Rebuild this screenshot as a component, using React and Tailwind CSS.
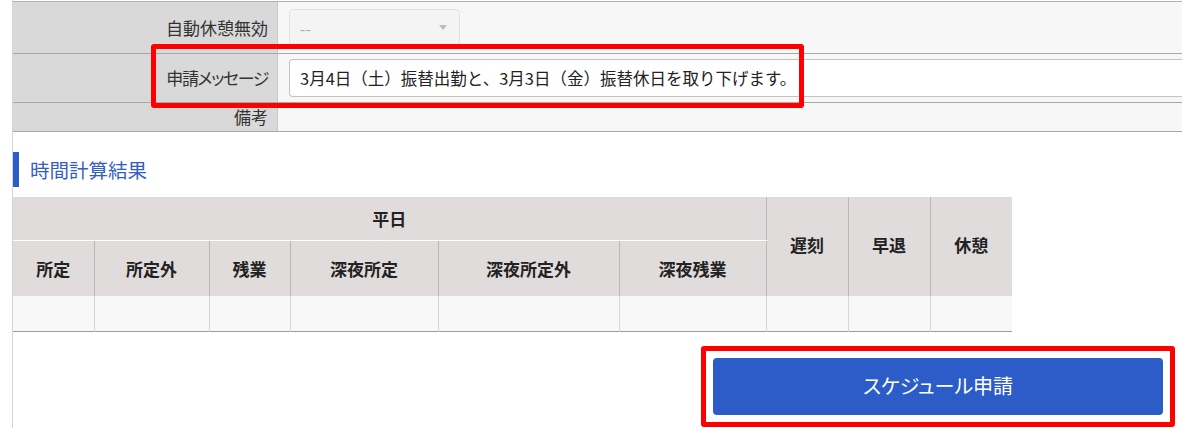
import React from 'react';

const font = { fontFamily: '"Noto Sans CJK JP", "Noto Sans", sans-serif' };

const subCols = [
  { label: '所定', w: 'w-[81px]' },
  { label: '所定外', w: 'w-[115px]' },
  { label: '残業', w: 'w-[81px]' },
  { label: '深夜所定', w: 'w-[148px]' },
  { label: '深夜所定外', w: 'w-[181px]' },
  { label: '深夜残業', w: 'w-[147px]' },
];

const sideCols = ['遅刻', '早退', '休憩'];

function FormRow({ label, height, children, last, tight }) {
  return (
    <div className={`flex ${height} ${last ? 'border-b border-[#a8a8a8]' : ''}`}>
      <div
        className={`flex w-[264px] shrink-0 items-center justify-end bg-[#d9d9d9] pr-[9px] text-[17px] text-[#333] [font-feature-settings:'palt'] ${
          tight ? 'tracking-[-1.4px]' : ''
        }`}
      >
        {label}
      </div>
      <div className="flex flex-1 items-center border-l border-[#c6c6c6] bg-[#f7f7f7] pl-[11px]">{children}</div>
    </div>
  );
}

export default function App() {
  return (
    <div className="h-[428px] w-[1182px] overflow-hidden bg-white pl-[12px]" style={font}>
      <div className="relative h-full border-l border-[#d4d4d4]">
        <div className="pt-px">
          <div className="flex flex-col border-t border-[#b4b4b4]">
            <FormRow label="自動休憩無効" height="h-[51px]">
              <div className="flex h-[38px] w-[171px] items-center justify-between rounded-[4px] border border-[#e2e2e2] bg-[#f4f4f4] pl-[10px] pr-[12px] text-[16px] text-[#aaa]">
                <span>--</span>
                <span className="h-0 w-0 border-x-[4px] border-t-[5px] border-x-transparent border-t-[#bdbdbd]" />
              </div>
            </FormRow>
            <div className="h-px bg-[#a8a8a8]" />
            <FormRow label="申請メッセージ" height="h-[48px]" tight>
              <div className="flex h-[38px] flex-1 items-center rounded-l-[4px] border border-r-0 border-[#c4c4c4] bg-white pl-[10px] text-[16.5px] text-[#222]">
                3月4日（土）振替出勤と、3月3日（金）振替休日を取り下げます。
              </div>
            </FormRow>
            <div className="h-px bg-[#a8a8a8]" />
            <FormRow label="備考" height="h-[29px]" last />
          </div>
        </div>

        <div className="pointer-events-none absolute left-[138px] top-[44px] h-[64px] w-[653px] rounded-[3px] border-[5px] border-[#ff0000]" />

        <div className="mt-[20px] flex h-[35px] items-center">
          <div className="h-full w-[6px] bg-[#2b5cc8]" />
          <h2 className="pl-[11px] text-[19.5px] font-normal text-[#3360c0]">時間計算結果</h2>
        </div>

        <table className="mt-[10px] w-[999px] table-fixed border-collapse text-[17px] font-bold text-[#222]">
          <colgroup>
            {subCols.map((c) => (
              <col key={c.label} className={c.w} />
            ))}
            {sideCols.map((c) => (
              <col key={c} className="w-[82px]" />
            ))}
          </colgroup>
          <thead>
            <tr className="h-[43px] bg-[#e0dcdc]">
              <th colSpan={6} className="border-b border-white text-center font-bold">平日</th>
              {sideCols.map((c) => (
                <th key={c} rowSpan={2} className="border-l border-[#b8b8b8] pb-[4px] text-center font-bold">
                  {c}
                </th>
              ))}
            </tr>
            <tr className="h-[56px] bg-[#e0dcdc]">
              {subCols.map((c, i) => (
                <th key={c.label} className={`text-center font-bold ${i > 0 ? 'border-l border-[#b8b8b8]' : ''}`}>
                  {c.label}
                </th>
              ))}
            </tr>
          </thead>
          <tbody>
            <tr className="h-[35px] border-b border-[#9c9c9c] bg-[#f8f8f8]">
              {[...subCols.map((c) => c.label), ...sideCols].map((c, i) => (
                <td key={c} className={i > 0 ? 'border-l border-[#d6d6d6]' : ''} />
              ))}
            </tr>
          </tbody>
        </table>

        <div className="mt-[14px] flex justify-end pr-[7px]">
          <div className="rounded-[3px] border-[5px] border-[#ff0000] p-[7px]">
            <button className="flex h-[57px] w-[450px] items-center justify-center rounded-[4px] bg-[#2b5cc8] text-[20px] text-white [font-feature-settings:'palt']">
              スケジュール申請
            </button>
          </div>
        </div>
      </div>
    </div>
  );
}
